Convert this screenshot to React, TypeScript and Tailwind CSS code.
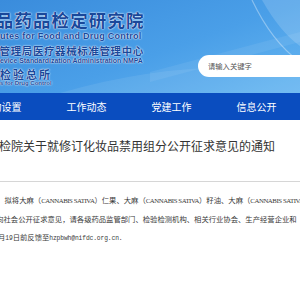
const navItems = ["机构设置", "工作动态", "党建工作", "信息公开"];

const mono = "font-['Liberation_Mono',monospace] text-[6.3px] tracking-[-0.12px]";
const serif = "font-['Liberation_Serif',serif] text-[6.8px] tracking-[-0.43px]";

const HeaderArt = () => (
  <svg className="absolute inset-0 h-full w-full" viewBox="0 0 300 93" preserveAspectRatio="none">
    <path d="M262,0 Q280,32 300,46 L300,0 Z" fill="#ffffff" fillOpacity="0.16" />
    <path d="M252,0 Q272,42 300,62" stroke="#ffffff" strokeOpacity="0.35" strokeWidth="1.2" fill="none" />
    <path d="M150,72 L300,32 L300,42 L150,82 Z" fill="#ffffff" fillOpacity="0.07" />
    <path d="M60,93 Q180,58 300,70 L300,93 Z" fill="#ffffff" fillOpacity="0.08" />
  </svg>
);

export default function App() {
  return (
    <div className="h-[300px] w-[300px] overflow-hidden bg-white font-['Noto_Sans_CJK_SC','Noto_Sans',sans-serif]">
      {/* Header */}
      <header className="relative h-[93px] overflow-hidden bg-[linear-gradient(160deg,#3a8cdc_0%,#4a9fe8_55%,#68b7f1_100%)]">
        <HeaderArt />
        <div className="relative flex">
          <div className="w-[150px] shrink-0 whitespace-nowrap font-bold text-[#19489a] [text-shadow:0_0_1px_#fff,0_0_2px_#fff]">
            <div className="mt-[10px] -ml-[60px] h-[20px] text-[17.5px] leading-[20px] tracking-[1.1px]">
              中国食品药品检定研究院
            </div>
            <div className="mt-px h-[10px] font-['Liberation_Sans',Arial,sans-serif] text-[9px] leading-[10px] tracking-[0.25px]">
              utes for Food and Drug Control
            </div>
            <div className="mt-[4px] -ml-[67px] h-[12px] text-[10.5px] leading-[12px] tracking-[0.6px]">
              国家药品监督管理局医疗器械标准管理中心
            </div>
            <div className="h-[7px] font-['Liberation_Sans',Arial,sans-serif] text-[6.9px] leading-[7px]">
              evice Standardization Administration NMPA
            </div>
            <div className="mt-[4px] -ml-[52px] h-[12px] text-[11px] leading-[12px] tracking-[2px]">
              中国药品检验总所
            </div>
            <div className="h-[6px] font-['Liberation_Sans',Arial,sans-serif] text-[6px] leading-[6px]">
              s for Drug Control
            </div>
          </div>
          <div className="ml-auto mt-[55px] flex h-[22px] w-[102px] items-center rounded-l-full bg-white pl-[10px]">
            <input
              className="w-full bg-transparent text-[7.3px] text-[#444] outline-none placeholder:text-[#555]"
              placeholder="请输入关键字"
            />
          </div>
        </div>
      </header>

      {/* Nav */}
      <nav className="flex h-[27px] items-center bg-[#0a4dbf]">
        <div className="-ml-[41px] flex">
          {navItems.map((item) => (
            <div key={item} className="w-[85px] shrink-0 text-center text-[10px] leading-[14px] text-white">
              {item}
            </div>
          ))}
        </div>
      </nav>

      {/* Article */}
      <main>
        <h1 className="mt-[18px] -ml-[13px] h-[16px] whitespace-nowrap text-[12px] leading-[16px] text-[#333]">
          中检院关于就修订化妆品禁用组分公开征求意见的通知
        </h1>
        <div className="mt-[27px] h-px bg-[#d6d6d6]" />
        <div className="mt-[9px] whitespace-nowrap text-[7.33px] leading-[18px] text-[#3a3a3a]">
          <p className="ml-[4.5px]">
            拟将大麻（<span className={serif}>CANNABIS SATIVA</span>）仁果、大麻（
            <span className={serif}>CANNABIS SATIVA</span>）籽油、大麻（
            <span className={serif}>CANNABIS SATIVA</span>）叶提取物纳入
          </p>
          <p className="-ml-[3.8px]">向社会公开征求意见，请各级药品监管部门、检验检测机构、相关行业协会、生产经营企业和</p>
          <p className="-ml-[2px]">
            月<span className={mono}>19</span>日前反馈至<span className={mono}>hzpbwh@nifdc.org.cn.</span>
          </p>
        </div>
      </main>
    </div>
  );
}
